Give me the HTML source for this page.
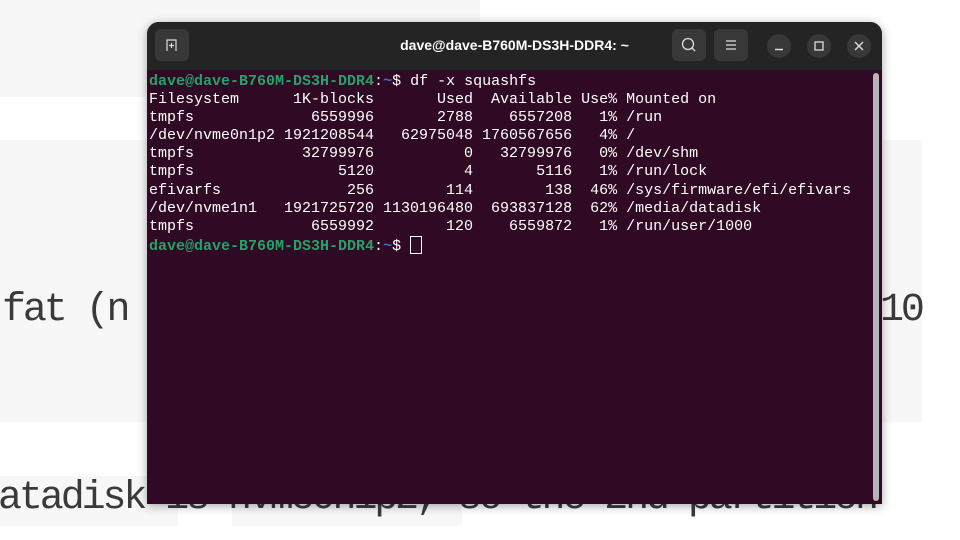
<!DOCTYPE html>
<html><head><meta charset="utf-8"><style>
html,body{margin:0;padding:0;width:960px;height:540px;overflow:hidden;background:#fff;position:relative;font-family:"Liberation Mono",monospace}
.g{position:absolute;background:#f7f7f7}
.bt{position:absolute;font-family:"Liberation Mono",monospace;font-size:40px;color:#3a3a3a;white-space:pre;letter-spacing:-3.1px}
#win{position:absolute;left:147px;top:22px;width:735px;height:482px;border-radius:12px 12px 0 0;background:#300a24;box-shadow:0 2px 10px rgba(0,0,0,.35);overflow:hidden}
#tb{position:absolute;left:0;top:0;width:735px;height:48px;background:#242424}
#title{position:absolute;left:0;right:0;top:0;height:48px;line-height:46px;text-align:center;color:#fff;font-family:"Liberation Sans",sans-serif;font-weight:bold;font-size:14px}
.btn{position:absolute;top:7px;width:34px;height:32px;border-radius:6px;background:#383838}
.cb{position:absolute;top:12px;width:24px;height:24px;border-radius:50%;background:#383838}
pre{position:absolute;left:2px;top:51px;margin:0;font-family:"Liberation Mono",monospace;font-size:15px;line-height:18.1px;color:#fff}
.p{color:#26a269;font-weight:bold}.b{color:#3a72c4;font-weight:bold}
#sb{position:absolute;left:726px;top:51px;width:6px;height:428px;border-radius:3px;background:#b8b3b6}
#cur{display:inline-block;width:10px;height:16px;border:1px solid #fff;vertical-align:-4px}
</style></head><body>
<div class="g" style="left:0;top:0;width:480px;height:97px"></div>
<div class="g" style="left:0;top:140px;width:922px;height:282px"></div>
<div class="g" style="left:0;top:476px;width:178px;height:50px"></div>
<div class="g" style="left:232px;top:476px;width:230px;height:50px"></div>
<div class="bt" style="left:2px;top:288px">fat (n</div>
<div class="bt" style="left:880px;top:288px">10</div>
<div class="bt" style="left:-2px;top:476px">atadisk is nvme0n1p2, so the 2nd partition</div>
<div id="win">
<div id="tb">
<div id="title">dave@dave-B760M-DS3H-DDR4: ~</div>
<div class="btn" style="left:8px"><svg width="34" height="32"><path d="M12 22V11h9v11M14 16.5h5M16.5 14v5" stroke="#ddd" stroke-width="1.2" fill="none"/></svg></div>
<div class="btn" style="left:525px"><svg width="34" height="32"><circle cx="16" cy="15" r="5.5" stroke="#ddd" stroke-width="1.3" fill="none"/><path d="M20 19l3 3" stroke="#ddd" stroke-width="1.3"/></svg></div>
<div class="btn" style="left:567px"><svg width="34" height="32"><path d="M12 12h10M12 16h10M12 20h10" stroke="#ddd" stroke-width="1.2"/></svg></div>
<div class="cb" style="left:620px"><svg width="24" height="24"><path d="M8 15.5h8" stroke="#ddd" stroke-width="1.4"/></svg></div>
<div class="cb" style="left:660px"><svg width="24" height="24"><rect x="8" y="8" width="8" height="8" stroke="#ddd" stroke-width="1.3" fill="none"/></svg></div>
<div class="cb" style="left:700px"><svg width="24" height="24"><path d="M8 8l8 8M16 8l-8 8" stroke="#ddd" stroke-width="1.4"/></svg></div>
</div>
<pre><span class="p">dave@dave-B760M-DS3H-DDR4</span>:<span class="b">~</span>$ df -x squashfs
Filesystem      1K-blocks       Used  Available Use% Mounted on
tmpfs             6559996       2788    6557208   1% /run
/dev/nvme0n1p2 1921208544   62975048 1760567656   4% /
tmpfs            32799976          0   32799976   0% /dev/shm
tmpfs                5120          4       5116   1% /run/lock
efivarfs              256        114        138  46% /sys/firmware/efi/efivars
/dev/nvme1n1   1921725720 1130196480  693837128  62% /media/datadisk
tmpfs             6559992        120    6559872   1% /run/user/1000
<span class="p">dave@dave-B760M-DS3H-DDR4</span>:<span class="b">~</span>$ <span id="cur"></span></pre>
<div id="sb"></div>
</div>
</body></html>
